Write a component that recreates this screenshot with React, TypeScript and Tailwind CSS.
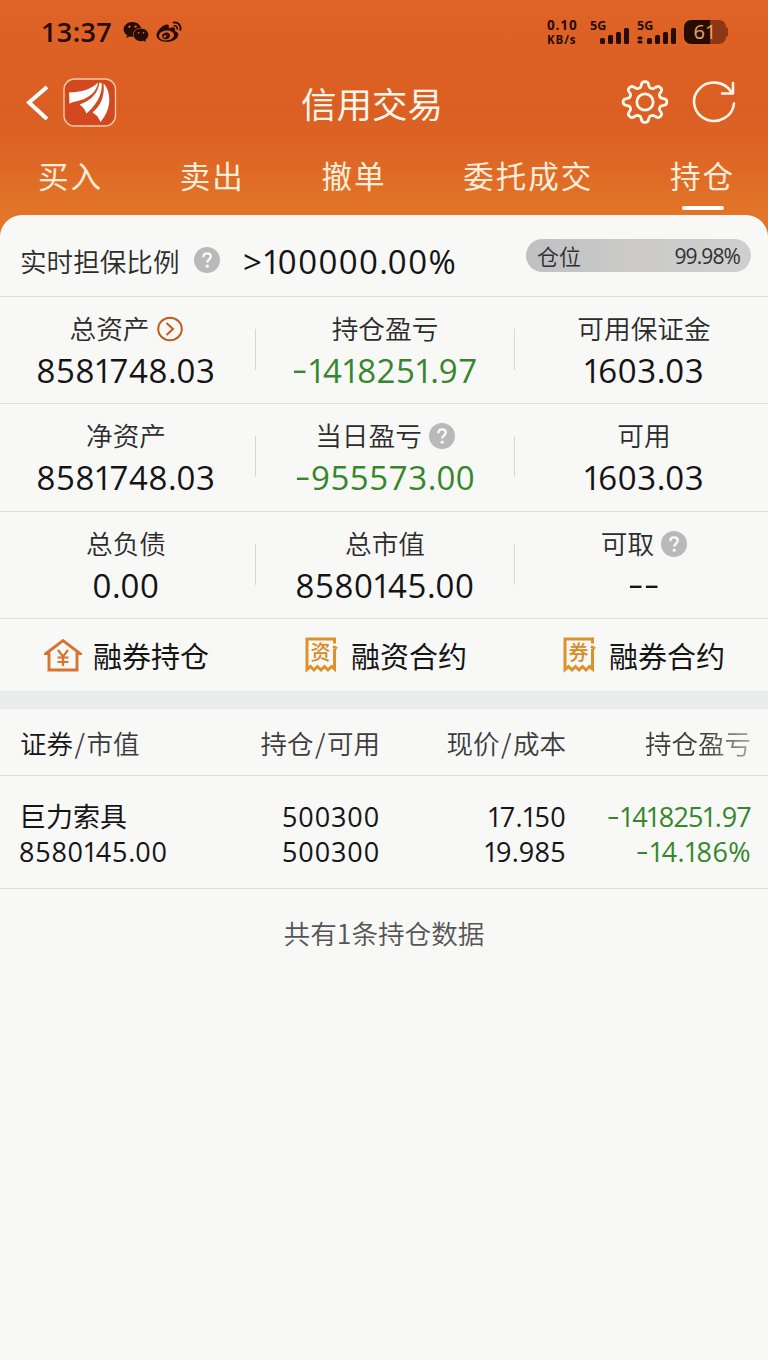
import type { ReactNode } from "react";
import { FaWeixin, FaWeibo } from "react-icons/fa";

const gearPath = (() => {
  const points: string[] = [];
  for (let i = 0; i < 160; i++) {
    const a = (i / 160) * Math.PI * 2;
    const wave = Math.tanh(1.7 * Math.cos(8 * a)) / Math.tanh(1.7);
    const r = 18.7 + 2.9 * wave;
    points.push(`${(24 + r * 1.01 * Math.sin(a)).toFixed(2)} ${(24 - r * 0.94 * Math.cos(a)).toFixed(2)}`);
  }
  return `M${points.join("L")}Z`;
})();

const glyphClass: Record<string, string> = {
  "1": "ml-[-0.045em] tracking-[-0.085em]",
  ".": "tracking-[0em]",
  "-": "relative top-[-0.06em] mr-[0.17em] inline-block origin-left scale-x-[1.45] tracking-[0em]",
};

function Num({ children, tracking = "tracking-[0.018em]" }: { children: string; tracking?: string }) {
  return (
    <span className={`whitespace-nowrap ${tracking}`}>
      {children.split("").map((c, i) => (glyphClass[c] ? <span key={i} className={glyphClass[c]}>{c}</span> : c))}
    </span>
  );
}

function Help() {
  return (
    <span className="flex h-[26px] w-[26px] shrink-0 items-center justify-center rounded-full bg-[#b9b9ba]">
      <svg width="26" height="26" viewBox="0 0 26 26" fill="none">
        <path d="M9.3 10.2C9.3 7.7 10.9 6.3 13.1 6.3c2.2 0 3.7 1.3 3.7 3.3 0 2.7-3.5 2.9-3.5 6" stroke="#fafafa" strokeWidth="2.3" />
        <circle cx="13.2" cy="19.2" r="1.6" fill="#fafafa" />
      </svg>
    </span>
  );
}

function Arrow() {
  return (
    <svg width="26" height="26" viewBox="0 0 26 26" fill="none" stroke="#c25a1c" strokeWidth="2">
      <ellipse cx="13" cy="13" rx="11.800" ry="11.200" />
      <path d="M9.5 7L16 13l-6.500 6" />
    </svg>
  );
}

function Logo() {
  return (
    <svg width="54" height="50" viewBox="0 0 54 50">
      <rect x="1" y="1" width="51.5" height="47" rx="10.5" fill="#d3481f" stroke="#f8c9a8" strokeWidth="1.4" />
      <path d="M6 14.500C18 14.500 29 11 35 4.500C34.500 13 25 20.500 18 22C14 23.500 9 24 6.500 25.700Z" fill="#fff" />
      <path d="M36.500 4.500L38.800 5.200C39.500 18 32 28 23.500 35.500C22 31 19 28 16.500 26.500C27 23 35 16 36.500 4.500Z" fill="#fff" />
      <path d="M40.500 5.500C47.500 12 50 30 37.500 44C36 39.500 33 36.500 29.500 34.500C38 28 42 17 40.500 5.500Z" fill="#fff" />
    </svg>
  );
}

function StatusBar() {
  return (
    <div className="flex h-[64px] items-start pl-[41px] pt-[19px] text-[#250d04]">
      <span className="w-[82px] whitespace-nowrap font-['Open_Sans'] text-[27px] font-semibold leading-[26px] tracking-[0.4px]">13:37</span>
      <FaWeixin className="h-[26px] w-[26px]" />
      <FaWeibo className="ml-[7px] mt-[1px] h-[25px] w-[26px]" />
      <div className="ml-[365px] mt-[-1px] flex w-[34px] flex-col whitespace-nowrap font-['Open_Sans'] font-bold leading-[15px]">
        <span className="text-[13.5px] tracking-[0.9px]">0.10</span>
        <span className="mt-[-1px] text-[11.5px] tracking-[0.9px]">KB/s</span>
      </div>
      <svg width="90" height="32" viewBox="0 -6 90 32" fill="#250d04" className="ml-[8px] mt-[-5px]">
        <text x="1" y="9.500" fontFamily="Open Sans" fontSize="12.5" fontWeight="700">5G</text>
        <rect x="11" y="18" width="5" height="6" rx="1.500" />
        <rect x="19" y="15" width="5" height="9" rx="1.500" />
        <rect x="27" y="12" width="5" height="12" rx="1.500" />
        <rect x="35" y="8" width="5" height="16" rx="1.500" />
        <text x="48" y="9.500" fontFamily="Open Sans" fontSize="12.5" fontWeight="700">5G</text>
        <rect x="48.500" y="16.500" width="5" height="3" rx="1.500" />
        <rect x="48.500" y="20.500" width="5" height="3" rx="1.500" />
        <rect x="58" y="18" width="5" height="6" rx="1.500" />
        <rect x="66" y="15" width="5" height="9" rx="1.500" />
        <rect x="74" y="12" width="5" height="12" rx="1.500" />
        <rect x="82" y="8" width="5" height="16" rx="1.500" />
      </svg>
      <div className="mt-[1px] flex items-center">
        <span className="ml-[5px] flex h-[24px] w-[42px] items-center justify-center rounded-[7px] bg-[linear-gradient(90deg,#250d04_62%,#8d3717_62%)] font-['Open_Sans'] text-[20px] leading-none text-[#f0a25e]">61</span>
        <span className="h-[10px] w-[2px] rounded-r bg-[#8d3717]" />
      </div>
    </div>
  );
}

function Header() {
  return (
    <header className="flex h-[81px] items-start pl-[26px] pt-[12px] text-[#fff6ea]">
      <svg width="23" height="36" viewBox="0 0 23 36" fill="none" stroke="#fff" strokeWidth="4" className="mt-[9px]">
        <path d="M21 2L3 17.500L21 34" />
      </svg>
      <span className="ml-[14px] mt-[2px]"><Logo /></span>
      <h1 className="ml-[184px] mt-[-1px] w-[144px] whitespace-nowrap text-[35.5px] leading-[56px]">信用交易</h1>
      <svg width="50" height="50" viewBox="0 0 50 50" fill="none" stroke="#fff6ea" strokeWidth="2.800" className="ml-[176px] mt-[2px]">
        <path d={gearPath} strokeLinejoin="round" />
        <circle cx="24" cy="24" r="8.200" />
      </svg>
      <svg width="46" height="44" viewBox="0 0 46 44" fill="none" stroke="#fff6ea" strokeWidth="2.600" strokeLinecap="round" strokeLinejoin="round" className="ml-[20px] mt-[4px]">
        <path d="M43 23.500A20 19.200 0 1 1 40 11.500" />
        <path d="M42 3V13.500H31" />
      </svg>
    </header>
  );
}

const tabs = ["买入", "卖出", "撤单", "委托成交", "持仓"];

function Tabs() {
  return (
    <nav className="flex h-[70px] justify-between pl-[38px] pr-[33px] text-[30.5px] leading-[60px] tracking-[2px] text-[#ffedd9]">
      {tabs.map((tab) => (
        <div key={tab} className="flex flex-col items-center whitespace-nowrap">
          <span className="h-[61px]">{tab}</span>
          {tab === "持仓" && <span className="h-[4px] w-[42px] rounded-full bg-white" />}
        </div>
      ))}
    </nav>
  );
}

type StatProps = { label: string; value: string; icon?: ReactNode; green?: boolean; className?: string };

function Stat({ label, value, icon, green, className = "" }: StatProps) {
  return (
    <div className={`flex flex-col items-center ${className}`}>
      <div className="mt-[13px] flex h-[38px] items-center gap-[7px] text-[26.7px] font-[350] text-[#2c2c2c]">
        <span className="mt-[-2px] whitespace-nowrap">{label}</span>
        {icon}
      </div>
      <div className={`mt-px h-[44px] font-['Open_Sans'] text-[33px] leading-[44px] ${green ? "text-[#35872a]" : "text-[#141414]"}`}><Num>{value}</Num></div>
    </div>
  );
}

const stats: StatProps[][] = [
  [
    { label: "总资产", value: "8581748.03", icon: <Arrow /> },
    { label: "持仓盈亏", value: "-1418251.97", green: true },
    { label: "可用保证金", value: "1603.03" },
  ],
  [
    { label: "净资产", value: "8581748.03" },
    { label: "当日盈亏", value: "-955573.00", green: true, icon: <Help /> },
    { label: "可用", value: "1603.03" },
  ],
  [
    { label: "总负债", value: "0.00" },
    { label: "总市值", value: "8580145.00" },
    { label: "可取", value: "--", icon: <Help /> },
  ],
];

function Divider() {
  return <span className="mt-[32px] h-[41px] w-px bg-[#d6d6d7]" />;
}

function House() {
  return (
    <svg width="38" height="36" viewBox="0 0 38 36" fill="none" stroke="#d87430" strokeWidth="2.900">
      <path d="M2 16.500L19 3.500L36 16.500H33V33H5V16.500Z" />
      <path d="M14 13L19 19.500L24 13M19 19V29M13.500 20.500H24.500M13.500 25H24.500" strokeWidth="2.200" />
    </svg>
  );
}

function Ticket({ mark }: { mark: string }) {
  return (
    <svg width="34" height="37" viewBox="0 0 34 37" fill="none" stroke="#dd9229" strokeWidth="3">
      <path d="M30.500 13V33L27.500 30.500L24 34L20.500 30.500L17 34L13.500 30.500L10 34L6.500 30.500L3 33.500V3H30.500V7.500M29 10.500L33 12.500" />
      <text x="16.500" y="24" textAnchor="middle" fill="#d98a25" stroke="none" fontFamily="Noto Sans CJK SC" fontSize="20" fontWeight="500">{mark}</text>
    </svg>
  );
}

function Slash() {
  return <span className="mx-[1.5px]">/</span>;
}

export default function App() {
  return (
    <div className="flex min-h-[1360px] w-[768px] flex-col overflow-hidden bg-[linear-gradient(180deg,#df6226_0px,#db5e23_110px,#de6725_160px,#e27528_215px,#e27528_235px)] font-['Noto_Sans_CJK_SC',sans-serif]">
      <StatusBar />
      <Header />
      <Tabs />
      <main className="flex flex-1 flex-col rounded-t-[22px] bg-[#f8f8f7]">
        <section className="flex h-[82px] items-start border-b border-[#dededf] pl-[20px] pr-[17px]">
          <span className="w-[174px] whitespace-nowrap text-[26.6px] font-[350] leading-[91px] text-[#2c2c2c]">实时担保比例</span>
          <span className="mt-[32px]"><Help /></span>
          <span className="ml-[23px] font-['Open_Sans'] text-[33px] leading-[94px] text-[#141414]"><Num tracking="tracking-[0.042em]">&gt;100000.00%</Num></span>
          <div className="ml-auto mt-[24px] flex h-[33px] w-[225px] items-center justify-between rounded-full bg-[linear-gradient(90deg,#bfc0c2,#cbcac9_45%,#cfcfd0)] px-[11px] text-[#303030]">
            <span className="mt-[-2px] text-[22px] font-[350] leading-[32px]">仓位</span>
            <span className="mt-[2px] font-['Open_Sans'] text-[21px] leading-[33px] tracking-[-0.9px]">99.98%</span>
          </div>
        </section>
        {stats.map((row, i) => (
          <section key={i} className="grid h-[107.3px] grid-cols-[255px_1px_258px_1px_253px] border-b border-[#dededf]">
            <Stat {...row[0]} className="pr-[3px]" />
            <Divider />
            <Stat {...row[1]} />
            <Divider />
            <Stat {...row[2]} className="pl-[5px]" />
          </section>
        ))}
        <section className="flex h-[72px] items-center text-[29px] text-[#151515]">
          <div className="flex w-[260px] items-center gap-[11px] pl-[44px]"><House /><span className="leading-[76px]">融券持仓</span></div>
          <div className="flex w-[258px] items-center gap-[13px] pl-[44px]"><Ticket mark="资" /><span className="leading-[76px]">融资合约</span></div>
          <div className="flex items-center gap-[13px] pl-[44px]"><Ticket mark="券" /><span className="leading-[76px]">融券合约</span></div>
        </section>
        <div className="h-[18px] bg-[#ebecee]" />
        <section className="grid h-[67px] grid-cols-[180px_180px_186px_185px] border-b border-[#dededf] pl-[20px] text-right text-[26.5px] font-[350] leading-[68px] text-[#3c3c3c]">
          <span className="whitespace-nowrap text-left"><span className="text-[#151515]">证券</span><Slash />市值</span>
          <span>持仓<Slash />可用</span>
          <span>现价<Slash />成本</span>
          <span className="bg-[linear-gradient(90deg,#3c3c3c_75%,#a5a5a5)] bg-clip-text text-transparent">持仓盈亏</span>
        </section>
        <section className="grid h-[113px] grid-cols-[180px_180px_186px_185px] border-b border-[#dededf] pl-[20px] pt-[23px] text-right font-['Open_Sans','Noto_Sans_CJK_SC',sans-serif] text-[27px] leading-[35px] text-[#151515]">
          <div className="ml-[-1px] flex flex-col text-left"><span>巨力索具</span><Num tracking="tracking-[0.028em]">8580145.00</Num></div>
          <div className="flex flex-col"><Num tracking="tracking-[0.033em]">500300</Num><Num tracking="tracking-[0.033em]">500300</Num></div>
          <div className="flex flex-col"><Num tracking="tracking-[0.01em]">17.150</Num><Num tracking="tracking-[0.01em]">19.985</Num></div>
          <div className="ml-[1px] flex flex-col text-[#35872a]"><Num tracking="tracking-[-0.03em]">-1418251.97</Num><Num tracking="tracking-[0.015em]">-14.186%</Num></div>
        </section>
        <p className="mt-[19px] text-center text-[26.600px] font-[350] leading-[50px] text-[#555]">共有1条持仓数据</p>
      </main>
    </div>
  );
}
